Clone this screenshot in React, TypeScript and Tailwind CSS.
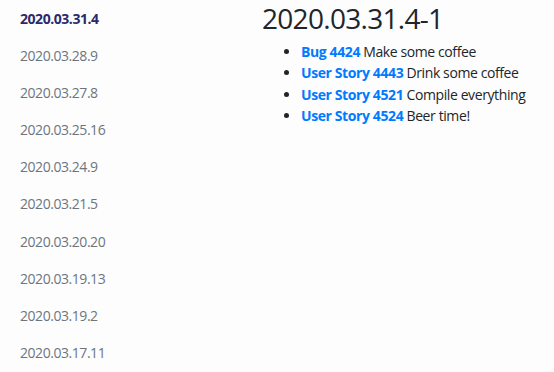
import React from "react";

type Change = {
    kind: string;
    id: number;
    title: string;
};

const releases: string[] = [
    "2020.03.31.4",
    "2020.03.28.9",
    "2020.03.27.8",
    "2020.03.25.16",
    "2020.03.24.9",
    "2020.03.21.5",
    "2020.03.20.20",
    "2020.03.19.13",
    "2020.03.19.2",
    "2020.03.17.11",
];

const changes: Change[] = [
    { kind: "Bug", id: 4424, title: "Make some coffee" },
    { kind: "User Story", id: 4443, title: "Drink some coffee" },
    { kind: "User Story", id: 4521, title: "Compile everything" },
    { kind: "User Story", id: 4524, title: "Beer time!" },
];

const App = () => {
    const selected = releases[0];

    return (
        <div className="flex min-h-[372px] w-full bg-[#fdfdfd] font-['Open_Sans',sans-serif] text-[#212529]">
            {/* Release list */}
            <nav className="w-[262px] shrink-0">
                <ul>
                    {releases.map((release) => (
                        <li key={release}>
                            <a
                                href="#"
                                className={`block px-5 py-2 text-[14px] leading-[21.1px] tracking-[-0.45px] ${
                                    release === selected ? "font-bold text-[#2b2a6c]" : "text-[#6c757d]"
                                }`}
                            >
                                {release}
                            </a>
                        </li>
                    ))}
                </ul>
            </nav>

            {/* Release details */}
            <main className="flex-1">
                <h2 className="text-[28px] leading-[36px] font-medium tracking-[-0.7px]">{selected}-1</h2>
                <ul className="mt-[5px] list-disc pl-[39px] text-[14px] leading-[21.3px] tracking-[-0.4px]">
                    {changes.map((change) => (
                        <li key={change.id}>
                            <a href="#" className="font-bold text-[#007bff]">
                                {change.kind} {change.id}
                            </a>{" "}
                            {change.title}
                        </li>
                    ))}
                </ul>
            </main>
        </div>
    );
};

export default App;
